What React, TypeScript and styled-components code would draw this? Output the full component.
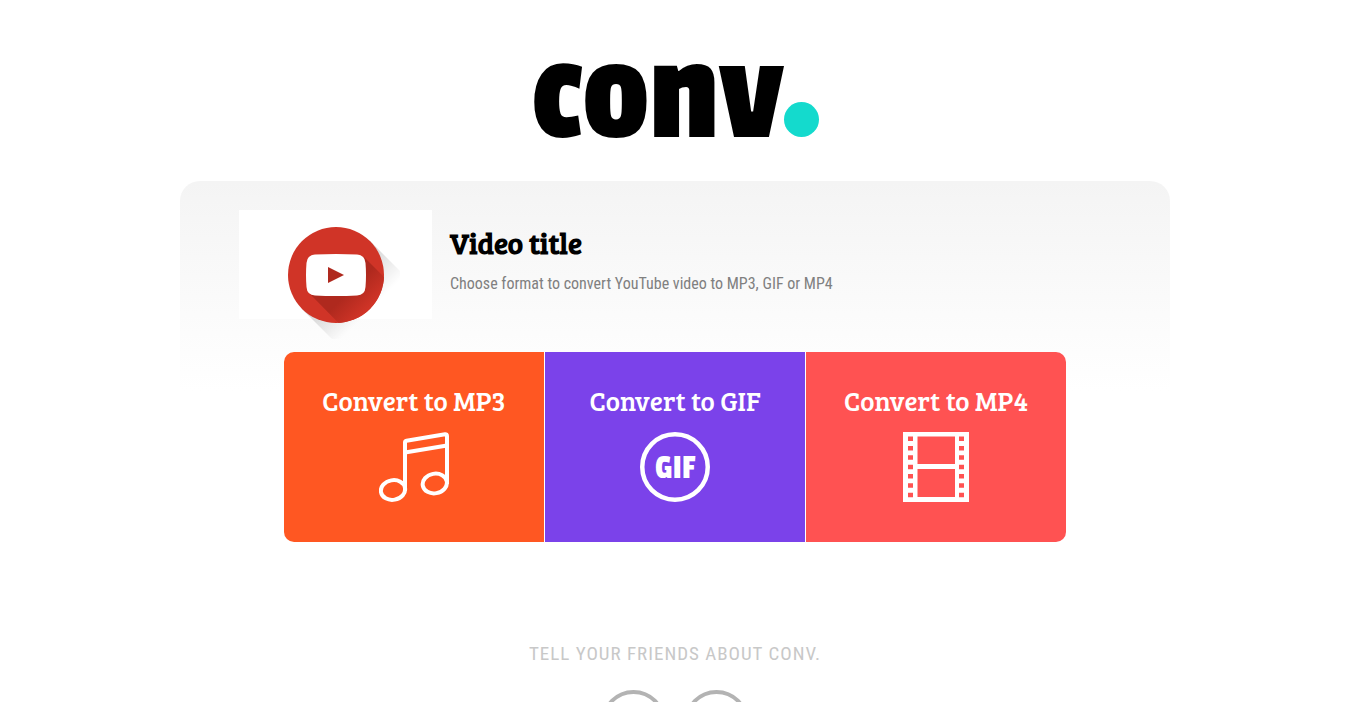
import React from "react";
import styled, { createGlobalStyle } from "styled-components";

const condensed = `"Roboto Condensed", "Liberation Sans Narrow", Roboto, "Liberation Sans", sans-serif`;
const slab = `"Bree Serif", "DejaVu Serif Condensed", "DejaVu Serif", serif`;
const display = `"Passion One", "Roboto Condensed", Roboto, sans-serif`;

const GlobalStyle = createGlobalStyle`
  *, *::before, *::after { box-sizing: border-box; }
  body { margin: 0; background: #fff; color: #000; font-family: ${condensed}; }
  h1, h2, p { margin: 0; }
`;

const Page = styled.div`
  display: flex;
  flex-direction: column;
  align-items: center;
  padding: 0 16px 40px 0;
`;

const Logo = styled.a`
  display: flex;
  align-items: flex-end;
  height: 137px;
  margin-bottom: 44px;
  color: #000;
  font-family: ${display};
  font-size: 148px;
  line-height: 84px;
  font-weight: 400;
  text-decoration: none;
`;

const LogoDot = styled.span`
  width: 35px;
  height: 35px;
  border-radius: 50%;
  background: #14dacd;
`;

const Card = styled.main`
  display: flex;
  flex-direction: column;
  width: 100%;
  max-width: 990px;
  padding: 29px 59px 0;
  border-radius: 20px;
  background: linear-gradient(#f4f4f4, #fff 210px);
`;

const Video = styled.section`
  display: flex;
  gap: 18px;
  margin-bottom: 33px;
`;

const Thumb = styled.div`
  flex: none;
  width: 193px;
  height: 109px;
  padding: 17px 0 0 49px;
  background: #fff;

  svg { display: block; overflow: visible; }
`;

const VideoText = styled.div`
  padding-top: 15px;
`;

const Title = styled.h1`
  margin-bottom: 13px;
  font-family: ${slab};
  font-size: 29px;
  line-height: 36px;
  font-weight: 700;
`;

const Hint = styled.p`
  color: #808080;
  font-size: 16px;
  line-height: 20px;
`;

const Formats = styled.section`
  display: grid;
  grid-template-columns: repeat(3, 1fr);
  gap: 1px;
  width: 100%;
  max-width: 782px;
  margin: 0 auto;
  border-radius: 10px;
  overflow: hidden;
`;

const FormatButton = styled.button<{ $color: string }>`
  display: flex;
  flex-direction: column;
  align-items: center;
  gap: 13px;
  height: 190px;
  padding: 31px 0 0;
  border: 0;
  background: ${(p) => p.$color};
  color: #fff;
  font-family: ${slab};
  font-size: 27px;
  line-height: 36px;
  cursor: pointer;
  white-space: nowrap;
`;

const Share = styled.footer`
  display: flex;
  flex-direction: column;
  align-items: center;
  gap: 24px;
  margin-top: 100px;
`;

const ShareTitle = styled.p`
  color: #c8c8c8;
  font-size: 19px;
  line-height: 24px;
  letter-spacing: 1px;
`;

const ShareLinks = styled.div`
  display: flex;
  gap: 18px;
`;

const ShareLink = styled.a`
  width: 65px;
  height: 65px;
  border: 4px solid #b3b3b3;
  border-radius: 50%;
`;

const YouTubeIcon = () => (
  <svg width="113" height="113" viewBox="0 0 113 113" aria-hidden="true">
    <defs>
      <linearGradient id="outer" x1="40" y1="40" x2="90" y2="90" gradientUnits="userSpaceOnUse">
        <stop offset="0.2" stopColor="#000" stopOpacity="0.18" />
        <stop offset="0.85" stopColor="#000" stopOpacity="0" />
      </linearGradient>
      <linearGradient id="inner" x1="50" y1="60" x2="76" y2="86" gradientUnits="userSpaceOnUse">
        <stop offset="0.3" stopColor="#af291e" />
        <stop offset="1" stopColor="#d03427" />
      </linearGradient>
      <clipPath id="disc"><circle cx="48" cy="48" r="48" /></clipPath>
    </defs>
    <path d="M82 14 112 44V112H44L14 82Z" fill="url(#outer)" />
    <circle cx="48" cy="48" r="48" fill="#d03427" />
    <path d="M76 30 130 84 84 130 22 67Z" fill="url(#inner)" clipPath="url(#disc)" />
    <path d="M27 27.500Q48 26.500 69 27.500Q77 28 77.500 36Q78.500 48 77.500 60Q77 68 69 68.500Q48 69.500 27 68.500Q19 68 18.500 60Q17.500 48 18.500 36Q19 28 27 27.500Z" fill="#fff" />
    <path d="M40 40 56 48 40 56Z" fill="#af291e" />
  </svg>
);

const MusicIcon = () => (
  <svg width="70" height="70" viewBox="0 0 70 70" fill="none" stroke="#fff" strokeWidth="4" aria-hidden="true">
    <path d="M26 59V10.500Q26 9 27.500 8.700L66 2.200Q68 2 68 4V52" />
    <path d="M26 20.500 68 13.500" />
    <ellipse cx="14" cy="58" rx="12.200" ry="9.800" transform="rotate(-10 14 58)" />
    <ellipse cx="55.800" cy="51.500" rx="12.200" ry="9.800" transform="rotate(-10 55.800 51.500)" />
  </svg>
);

const GifLabel = styled.text`
  fill: #fff;
  font-family: ${display};
  font-size: 34px;
  font-weight: 400;
  text-anchor: middle;
`;

const GifIcon = () => (
  <svg width="70" height="70" viewBox="0 0 70 70" aria-hidden="true">
    <circle cx="35" cy="35" r="32.750" fill="none" stroke="#fff" strokeWidth="4.500" />
    <GifLabel x="35" y="46">GIF</GifLabel>
  </svg>
);

const FilmIcon = () => (
  <svg width="66" height="70" viewBox="0 0 66 70" aria-hidden="true">
    <path
      fill="#fff"
      fillRule="evenodd"
      d={
        "M0 0H66V70H0ZM14.500 4.500H52V32H14.500ZM14.500 37H52V65H14.500Z" +
        [4.5, 14, 23.3, 32.7, 42, 51.3, 60.7].map((y) => `M5 ${y}h5v4.500h-5ZM56 ${y}h5v4.500h-5Z`).join("")
      }
    />
  </svg>
);

const formats = [
  { name: "MP3", color: "#ff5722", Icon: MusicIcon },
  { name: "GIF", color: "#7b42ea", Icon: GifIcon },
  { name: "MP4", color: "#ff5252", Icon: FilmIcon },
];

export default function App() {
  return (
    <>
      <GlobalStyle />
      <Page>
        <Logo href="#">
          conv
          <LogoDot />
        </Logo>
        <Card>
          <Video>
            <Thumb><YouTubeIcon /></Thumb>
            <VideoText>
              <Title>Video title</Title>
              <Hint>Choose format to convert YouTube video to MP3, GIF or MP4</Hint>
            </VideoText>
          </Video>
          <Formats>
            {formats.map(({ name, color, Icon }) => (
              <FormatButton key={name} type="button" $color={color}>
                Convert to {name}
                <Icon />
              </FormatButton>
            ))}
          </Formats>
        </Card>
        <Share>
          <ShareTitle>TELL YOUR FRIENDS ABOUT CONV.</ShareTitle>
          <ShareLinks>
            <ShareLink href="#" aria-label="Facebook" />
            <ShareLink href="#" aria-label="Twitter" />
          </ShareLinks>
        </Share>
      </Page>
    </>
  );
}
